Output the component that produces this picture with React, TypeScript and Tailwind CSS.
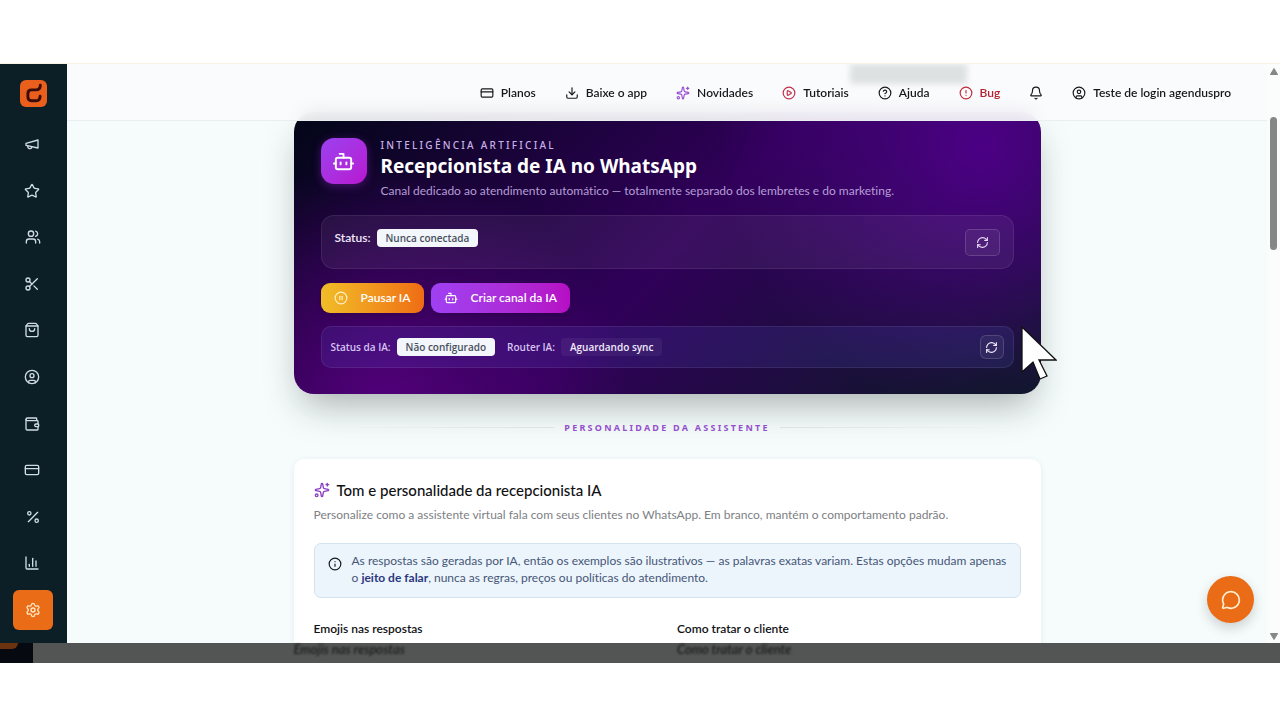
import type { ComponentType, ReactNode } from "react";
import {
  Bell,
  Bot,
  ChartColumn,
  CircleAlert,
  CircleHelp,
  CirclePause,
  CirclePlay,
  CircleUser,
  CreditCard,
  Download,
  Info,
  MessageCircle,
  Percent,
  RefreshCw,
  Scissors,
  Settings,
  ShoppingBag,
  Sparkles,
  Star,
  Users,
  Wallet,
} from "lucide-react";

type IconProps = { className?: string; strokeWidth?: number };
type Icon = ComponentType<IconProps>;

function Megaphone({ className }: IconProps) {
  return (
    <svg viewBox="0 0 24 24" fill="none" stroke="currentColor" strokeWidth="2" strokeLinecap="round" strokeLinejoin="round" className={className}>
      <path d="m3 11 18-5v12L3 14v-3z" />
      <path d="M11.6 16.8a3 3 0 1 1-5.8-1.6" />
    </svg>
  );
}

function Logo() {
  return (
    <svg viewBox="0 0 27 27" className="size-[27px]" aria-hidden="true">
      <rect width="27" height="27" rx="6" fill="#ea5f1c" />
      <path
        d="M20.300 5.300C20.300 8.400 18.800 9.900 16 9.900h-4.400C9.200 9.900 7.900 11.300 7.900 13.400v3.600c0 2.300 1.400 3.700 3.700 3.700h4.600c2.400 0 3.800-1.600 3.900-4.500"
        fill="none"
        stroke="#3a0d0c"
        strokeWidth="2.900"
        strokeLinecap="round"
      />
    </svg>
  );
}

const menu: { label: string; icon: Icon; centered?: boolean }[] = [
  { label: "Marketing", icon: Megaphone },
  { label: "Avaliações", icon: Star },
  { label: "Clientes", icon: Users, centered: true },
  { label: "Serviços", icon: Scissors },
  { label: "Produtos", icon: ShoppingBag },
  { label: "Profissionais", icon: CircleUser },
  { label: "Carteira", icon: Wallet },
  { label: "Pagamentos", icon: CreditCard },
  { label: "Comissões", icon: Percent, centered: true },
  { label: "Relatórios", icon: ChartColumn },
];

function Sidebar() {
  return (
    <aside className="flex w-[67px] shrink-0 flex-col bg-[#0d1f26] px-[13px] pt-4 pb-[13px]">
      <a href="#inicio" aria-label="Início" className="ml-[7px]">
        <Logo />
      </a>
      <nav className="mt-[17px] flex flex-1 flex-col justify-between">
        {menu.map(({ label, icon: ItemIcon, centered }) => (
          <a
            key={label}
            href="#menu"
            aria-label={label}
            className={`flex size-10 items-center justify-center text-[#cfdde4] ${centered ? "" : "pr-[3px]"}`}
          >
            <ItemIcon className="size-4" />
          </a>
        ))}
        <a href="#menu" aria-label="Configurações" className="flex size-10 items-center justify-center rounded-md bg-[#ea6c17] text-[#ffe9c4]">
          <Settings className="size-4" />
        </a>
      </nav>
    </aside>
  );
}

const links: { label: string; icon: Icon; tone: string; text?: string }[] = [
  { label: "Planos", icon: CreditCard, tone: "text-[#16181d]" },
  { label: "Baixe o app", icon: Download, tone: "text-[#16181d]" },
  { label: "Novidades", icon: Sparkles, tone: "text-[#9b4fd0]" },
  { label: "Tutoriais", icon: CirclePlay, tone: "text-[#c22f4d]" },
  { label: "Ajuda", icon: CircleHelp, tone: "text-[#16181d]" },
  { label: "Bug", icon: CircleAlert, tone: "text-[#c02a3b]", text: "text-[#b3202f]" },
];

function TopBar() {
  return (
    <header className="relative z-10 h-[57px] shrink-0 overflow-hidden border-b border-[#e9eef0] bg-[#f9fbfc]/90 backdrop-blur-sm">
      <div className="absolute top-0 left-[783px] h-5 w-[117px] bg-[#dde1e1] blur-[3px]" />
      <div className="relative flex h-full items-center justify-end gap-[29px] pt-px pr-9 text-[12px] font-semibold whitespace-nowrap text-[#16181d]">
        {links.map(({ label, icon: LinkIcon, tone, text }) => (
          <a key={label} href="#ajuda" className={`flex items-center gap-[7px] ${text ?? ""}`}>
            <LinkIcon className={`size-[14px] ${tone}`} />
            {label}
          </a>
        ))}
        <button type="button" aria-label="Notificações">
          <Bell className="size-[14px]" />
        </button>
        <button type="button" className="flex items-center gap-[7px]">
          <CircleUser className="size-[14px]" />
          Teste de login agenduspro
        </button>
      </div>
    </header>
  );
}

function Badge({ children, dark }: { children: ReactNode; dark?: boolean }) {
  return (
    <span
      className={`flex h-[18px] items-center rounded-[4px] px-[9px] font-['Open_Sans'] text-[10px] font-semibold ${
        dark ? "bg-white/5 text-[#f1eafb]" : "bg-[#f3f6fa] text-[#48505e]"
      }`}
    >
      {children}
    </span>
  );
}

function ReceptionCard() {
  return (
    <section className="rounded-[20px] bg-[radial-gradient(circle_at_92%_12%,#4c0085_0%,transparent_36%),radial-gradient(circle_at_12%_105%,#52007a_0%,transparent_34%),linear-gradient(135deg,#020617_0%,#300059_50%,#0f172a_94%)] px-[27px] py-[26px] shadow-[0_18px_36px_-8px_rgba(30,40,40,0.36)]">
      <div className="flex items-start gap-[14px]">
        <div className="flex size-[46px] shrink-0 items-center justify-center rounded-[13px] bg-linear-to-br from-[#9a3ff0] to-[#b812d0] text-white shadow-[0_2px_10px_rgba(168,50,230,0.35)]">
          <Bot className="size-[23px]" />
        </div>
        <div>
          <p className="font-['Noto_Sans'] text-[10px] leading-[14px] font-medium tracking-[0.225em] text-[#c9b0e8]">INTELIGÊNCIA ARTIFICIAL</p>
          <h1 className="font-['Noto_Sans'] text-[19px] leading-[28px] font-bold text-white">Recepcionista de IA no WhatsApp</h1>
          <p className="text-[12px] leading-[22px] text-[#b59ed6]">
            Canal dedicado ao atendimento automático — totalmente separado dos lembretes e do marketing.
          </p>
        </div>
      </div>

      <div className="mt-[13px] flex h-[54px] items-center justify-between rounded-[13px] border border-white/8 bg-white/6 px-[13px]">
        <div className="mb-2 flex items-center gap-[6px] text-[12px] font-semibold text-[#f0e9fa]">
          Status:
          <Badge>Nunca conectada</Badge>
        </div>
        <button type="button" aria-label="Atualizar status" className="flex h-[27px] w-[35px] items-center justify-center rounded-[5px] border border-white/15 bg-white/5 text-[#eadcf8]">
          <RefreshCw className="size-[13px]" />
        </button>
      </div>

      <div className="mt-[14px] flex gap-[7px] text-[12px] font-semibold text-white">
        <button type="button" className="flex h-[30px] items-center gap-[13px] rounded-[9px] bg-linear-to-r from-[#f0bd28] to-[#ee6c14] px-[13px] shadow-md">
          <CirclePause className="size-[14px] text-[#fff1c9]" />
          Pausar IA
        </button>
        <button type="button" className="flex h-[30px] items-center gap-[13px] rounded-[9px] bg-linear-to-r from-[#9f40f2] to-[#b60dc4] px-[13px] shadow-md">
          <Bot className="size-[14px]" />
          Criar canal da IA
        </button>
      </div>

      <div className="mt-[13px] flex h-[42px] items-center justify-between rounded-[10px] border border-white/8 bg-[#6470ff]/12 px-[9px]">
        <div className="flex items-center gap-[6px] font-['Open_Sans'] text-[10px] font-semibold text-[#d5c3f3]">
          Status da IA:
          <Badge>Não configurado</Badge>
          <span className="ml-[6px]">Router IA:</span>
          <Badge dark>Aguardando sync</Badge>
        </div>
        <button type="button" aria-label="Atualizar IA" className="flex size-6 items-center justify-center rounded-[6px] border border-white/15 bg-white/5 text-[#f3eafc]">
          <RefreshCw className="size-[13px]" />
        </button>
      </div>
    </section>
  );
}

function PersonalityCard() {
  return (
    <section className="min-h-[300px] rounded-[10px] bg-white px-5 pt-[19px] shadow-[0_1px_6px_rgba(20,60,60,0.07)]">
      <h2 className="flex items-center gap-[7px] text-[15px] leading-[24px] font-medium text-[#101114]">
        <Sparkles className="size-4 text-[#8b3fc4]" />
        Tom e personalidade da recepcionista IA
      </h2>
      <p className="mt-1 text-[12px] leading-[18px] text-[#7d8084]">
        Personalize como a assistente virtual fala com seus clientes no WhatsApp. Em branco, mantém o comportamento padrão.
      </p>
      <div className="mt-[19px] flex gap-[10px] rounded-[7px] border border-[#d3e2ee] bg-[#ecf5fc] pt-[8px] pr-1 pb-[11px] pl-[13px]">
        <Info className="mt-[5px] size-[14px] shrink-0 text-[#16181d]" />
        <p className="text-[12px] leading-[17px] text-[#475577]">
          As respostas são geradas por IA, então os exemplos são ilustrativos — as palavras exatas variam. Estas opções mudam apenas
          <br />o <strong className="font-bold text-[#2b377f]">jeito de falar</strong>, nunca as regras, preços ou políticas do atendimento.
        </p>
      </div>
      <div className="mt-[22px] grid grid-cols-2 gap-5 text-[12px] leading-[18px] font-semibold text-[#101114]">
        <h3>Emojis nas respostas</h3>
        <h3>Como tratar o cliente</h3>
      </div>
    </section>
  );
}

function ScrollRail() {
  return (
    <div className="flex w-[13px] shrink-0 flex-col items-center justify-between bg-[#fbfcfc] pt-1 pb-[3px]" aria-hidden="true">
      <div className="flex flex-col items-center">
        <svg viewBox="0 0 8 7" className="h-[7px] w-2"><path d="M4 0.500 7.600 6.500H0.400z" fill="#858786" stroke="#858786" strokeLinejoin="round" /></svg>
        <div className="mt-[42px] h-[133px] w-[7px] rounded-full bg-[#858786]" />
      </div>
      <svg viewBox="0 0 8 7" className="h-[7px] w-2"><path d="M4 6.500 7.600 0.500H0.400z" fill="#858786" stroke="#858786" strokeLinejoin="round" /></svg>
    </div>
  );
}

export default function App() {
  return (
    <div className="flex h-screen flex-col overflow-hidden bg-white font-['Lato','Noto_Sans',sans-serif] [font-variant-ligatures:none]">
      <div className="h-16 shrink-0 border-b border-[#fbf0e4]" />

      <div className="relative flex min-h-0 flex-1">
        <Sidebar />
        <main className="relative flex min-w-0 flex-1 flex-col overflow-hidden bg-[#f5fcfb]">
          <TopBar />
          <div className="mx-auto -mt-[9px] w-full max-w-[747px] shrink-0">
            <ReceptionCard />
            <div className="mt-[26px] mb-6 flex h-[15px] items-center gap-[10px] px-[26px]">
              <div className="h-px flex-1 bg-linear-to-r from-transparent to-[#dce2e2]" />
              <span className="font-['Noto_Sans'] text-[9px] font-bold tracking-[0.25em] text-[#9450cc]">PERSONALIDADE DA ASSISTENTE</span>
              <div className="h-px flex-1 bg-linear-to-l from-transparent to-[#dce2e2]" />
            </div>
            <PersonalityCard />
          </div>
          <svg viewBox="0 0 36 56" className="absolute top-[261px] left-[954px] z-20 h-[56px] w-9" aria-hidden="true">
            <path d="M1 2v45l11-10 7 17 7-3-8-16h17z" fill="#fff" stroke="#111" strokeWidth="1.300" />
          </svg>
          <button type="button" aria-label="Abrir chat" className="absolute right-[13px] bottom-5 z-20 flex size-[47px] items-center justify-center rounded-full bg-[#ea6c17] text-[#fff0d2] shadow-[0_5px_12px_rgba(60,50,70,0.22)]">
            <MessageCircle className="size-5" />
          </button>
        </main>
        <ScrollRail />
      </div>

      <div className="flex h-5 shrink-0 bg-[#535554]" aria-hidden="true">
        <div className="w-[33px] shrink-0 bg-[#06090f]">
          <div className="h-[6px] w-[18px] rounded-br-md bg-[#6b3210]" />
        </div>
        <div className="flex-1 pr-[13px] pl-[34px]">
          <div className="mx-auto grid w-full max-w-[747px] grid-cols-2 gap-5 text-[13px] leading-[12px] font-semibold text-[#1b1c1c] italic blur-[1px]">
            <span>Emojis nas respostas</span>
            <span>Como tratar o cliente</span>
          </div>
        </div>
      </div>
      <div className="h-[57px] shrink-0" />
    </div>
  );
}
